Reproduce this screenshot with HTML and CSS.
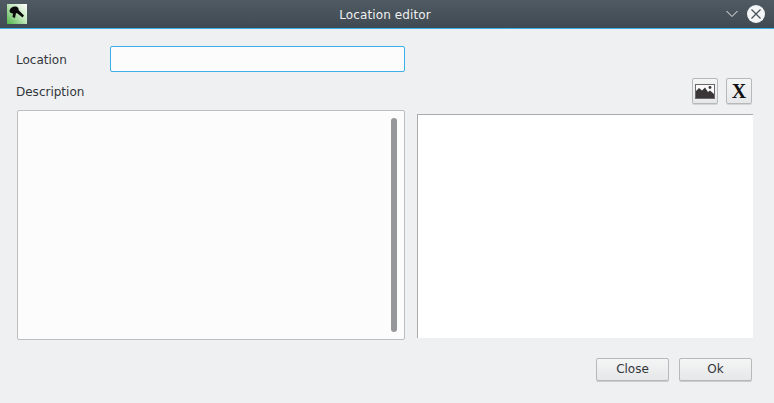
FILE: index.html
```html
<!DOCTYPE html>
<html lang="en">
<head>
    <meta charset="UTF-8">
    <meta name="viewport" content="width=device-width, initial-scale=1.0">
    <title>Location editor</title>
    <link rel="stylesheet" href="styles.css">
</head>
<body>

    <div class="window">
        <!-- Title bar -->
        <div class="titlebar">
            <div class="app-icon">
                <svg width="20" height="20" viewBox="0 0 20 20">
                    <defs>
                        <linearGradient id="iconBg" x1="0" y1="1" x2="1" y2="0">
                            <stop offset="0" stop-color="#4fb548"/>
                            <stop offset="0.55" stop-color="#c4e8c0"/>
                            <stop offset="1" stop-color="#ffffff"/>
                        </linearGradient>
                    </defs>
                    <rect width="20" height="20" fill="url(#iconBg)"/>
                    <path d="M2.500 7 C3 3.500 6 2 9 2.500 C11 3 12 4.500 11.500 6 L17 11.500 L15.500 13.500 L10.500 9.500 L9 9 L8 14 L5.500 13 L6 9.500 C4 9.500 2.500 8.500 2.500 7 Z" fill="#0a0a0a"/>
                </svg>
            </div>
            <div class="title">Location editor</div>
            <svg class="win-min" width="14" height="8" viewBox="0 0 14 8">
                <path d="M1.500 1 L7 6.500 L12.500 1" fill="none" stroke="#f2f4f5" stroke-width="1"/>
            </svg>
            <div class="win-close">
                <svg width="18" height="18" viewBox="0 0 18 18">
                    <circle cx="9" cy="9" r="9" fill="#f4f5f6"/>
                    <path d="M4.500 4.500 L13.500 13.500 M13.500 4.500 L4.500 13.500" stroke="#434d55" stroke-width="1.200"/>
                </svg>
            </div>
        </div>

        <div class="content">
            <!-- Location input -->
            <div class="location-row">
                <label class="field-label">Location</label>
                <input type="text" class="location-input">
            </div>

            <!-- Description header with tool buttons -->
            <div class="description-row">
                <span class="field-label">Description</span>
                <div class="tools">
                    <button class="tool-btn">
                        <svg width="20" height="15" viewBox="0 0 20 15">
                            <rect x="0.500" y="0.500" width="19" height="14" fill="#fafafa" stroke="#6b6768"/>
                            <path d="M1 14 V7 L4 4 L7 6.500 L10 3.500 L13 8 L15 6.500 L19 10 V14 Z" fill="#3a3536"/>
                            <circle cx="15" cy="3.500" r="1.400" fill="#3a3536"/>
                        </svg>
                    </button>
                    <button class="tool-btn tool-x">X</button>
                </div>
            </div>

            <!-- Editor and preview -->
            <div class="panes">
                <div class="editor">
                    <div class="scrollbar"></div>
                </div>
                <div class="preview"></div>
            </div>

            <!-- Buttons -->
            <div class="actions">
                <button class="action-btn">Close</button>
                <button class="action-btn">Ok</button>
            </div>
        </div>
    </div>

</body>
</html>
```

FILE: styles.css
```css
html, body {
    margin: 0;
    height: 100%;
}
body {
    font-family: "DejaVu Sans", sans-serif;
    font-size: 12px;
    color: #31363b;
    background-color: #eff0f1;
    overflow: hidden;
}
.window {
    display: flex;
    flex-direction: column;
    height: 403px;
}
.titlebar {
    display: flex;
    align-items: center;
    height: 28px;
    padding-left: 7px;
    background: linear-gradient(#4f5a62, #3f4a52);
    border-bottom: 1px solid #3daee9;
    position: relative;
}
.app-icon {
    width: 20px;
    height: 20px;
    line-height: 0;
}
.title {
    flex: 1;
    text-align: center;
    color: #eff0f1;
    font-size: 12px;
    letter-spacing: 0.12px;
    padding-top: 2px;
    padding-left: 32px;
    padding-right: 63px;
}
.win-min {
    position: absolute;
    left: 725px;
    top: 10px;
}
.win-close {
    position: absolute;
    left: 747px;
    top: 5px;
    width: 18px;
    height: 18px;
    line-height: 0;
}
.content {
    flex: 1;
    display: flex;
    flex-direction: column;
    padding: 17px 22px 0 16px;
}
.location-row {
    display: flex;
    align-items: center;
    height: 26px;
}
.field-label {
    width: 94px;
    padding-top: 2px;
    font-size: 12px;
}
.location-input {
    width: 295px;
    height: 26px;
    box-sizing: border-box;
    border: 1px solid #3daee9;
    border-radius: 2px;
    background-color: #fcfcfc;
    outline: none;
    padding: 0 4px;
}
.description-row {
    display: flex;
    align-items: center;
    justify-content: space-between;
    height: 26px;
    margin-top: 6px;
}
.tools {
    display: flex;
    gap: 8px;
}
.tool-btn {
    width: 26px;
    height: 26px;
    padding: 0;
    display: flex;
    align-items: center;
    justify-content: center;
    border: 1px solid #b6b8ba;
    border-radius: 2px;
    background: linear-gradient(#f4f5f5, #e6e7e8);
    box-shadow: 0 1px 0 #d4d5d6;
}
.tool-x {
    font-family: "Liberation Serif", serif;
    font-size: 20px;
    font-weight: bold;
    color: #111;
}
.panes {
    display: flex;
    align-items: flex-start;
    margin-top: 6px;
    margin-right: -1px;
    padding-left: 1px;
}
.editor {
    flex-shrink: 0;
    width: 388px;
    height: 230px;
    box-sizing: border-box;
    border: 1px solid #bcbebf;
    border-radius: 2px;
    background-color: #fcfcfc;
    display: flex;
    justify-content: flex-end;
    padding: 7px 7px 7px 0;
}
.scrollbar {
    width: 6px;
    border-radius: 3px;
    background-color: #96979b;
}
.preview {
    flex-shrink: 0;
    width: 335px;
    height: 223px;
    margin-top: 4px;
    margin-left: 12px;
    background-color: #fff;
    border-top: 1px solid #a9abac;
    border-left: 1px solid #a9abac;
}
.actions {
    display: flex;
    justify-content: flex-end;
    gap: 10px;
    margin-top: 18px;
}
.action-btn {
    width: 73px;
    height: 23px;
    padding: 0 0 2px;
    font-family: "DejaVu Sans", sans-serif;
    font-size: 12px;
    color: #31363b;
    border: 1px solid #b6b8ba;
    border-radius: 2px;
    background: linear-gradient(#f4f5f5, #e6e7e8);
    box-shadow: 0 1px 0 #c9cacb;
}
```
